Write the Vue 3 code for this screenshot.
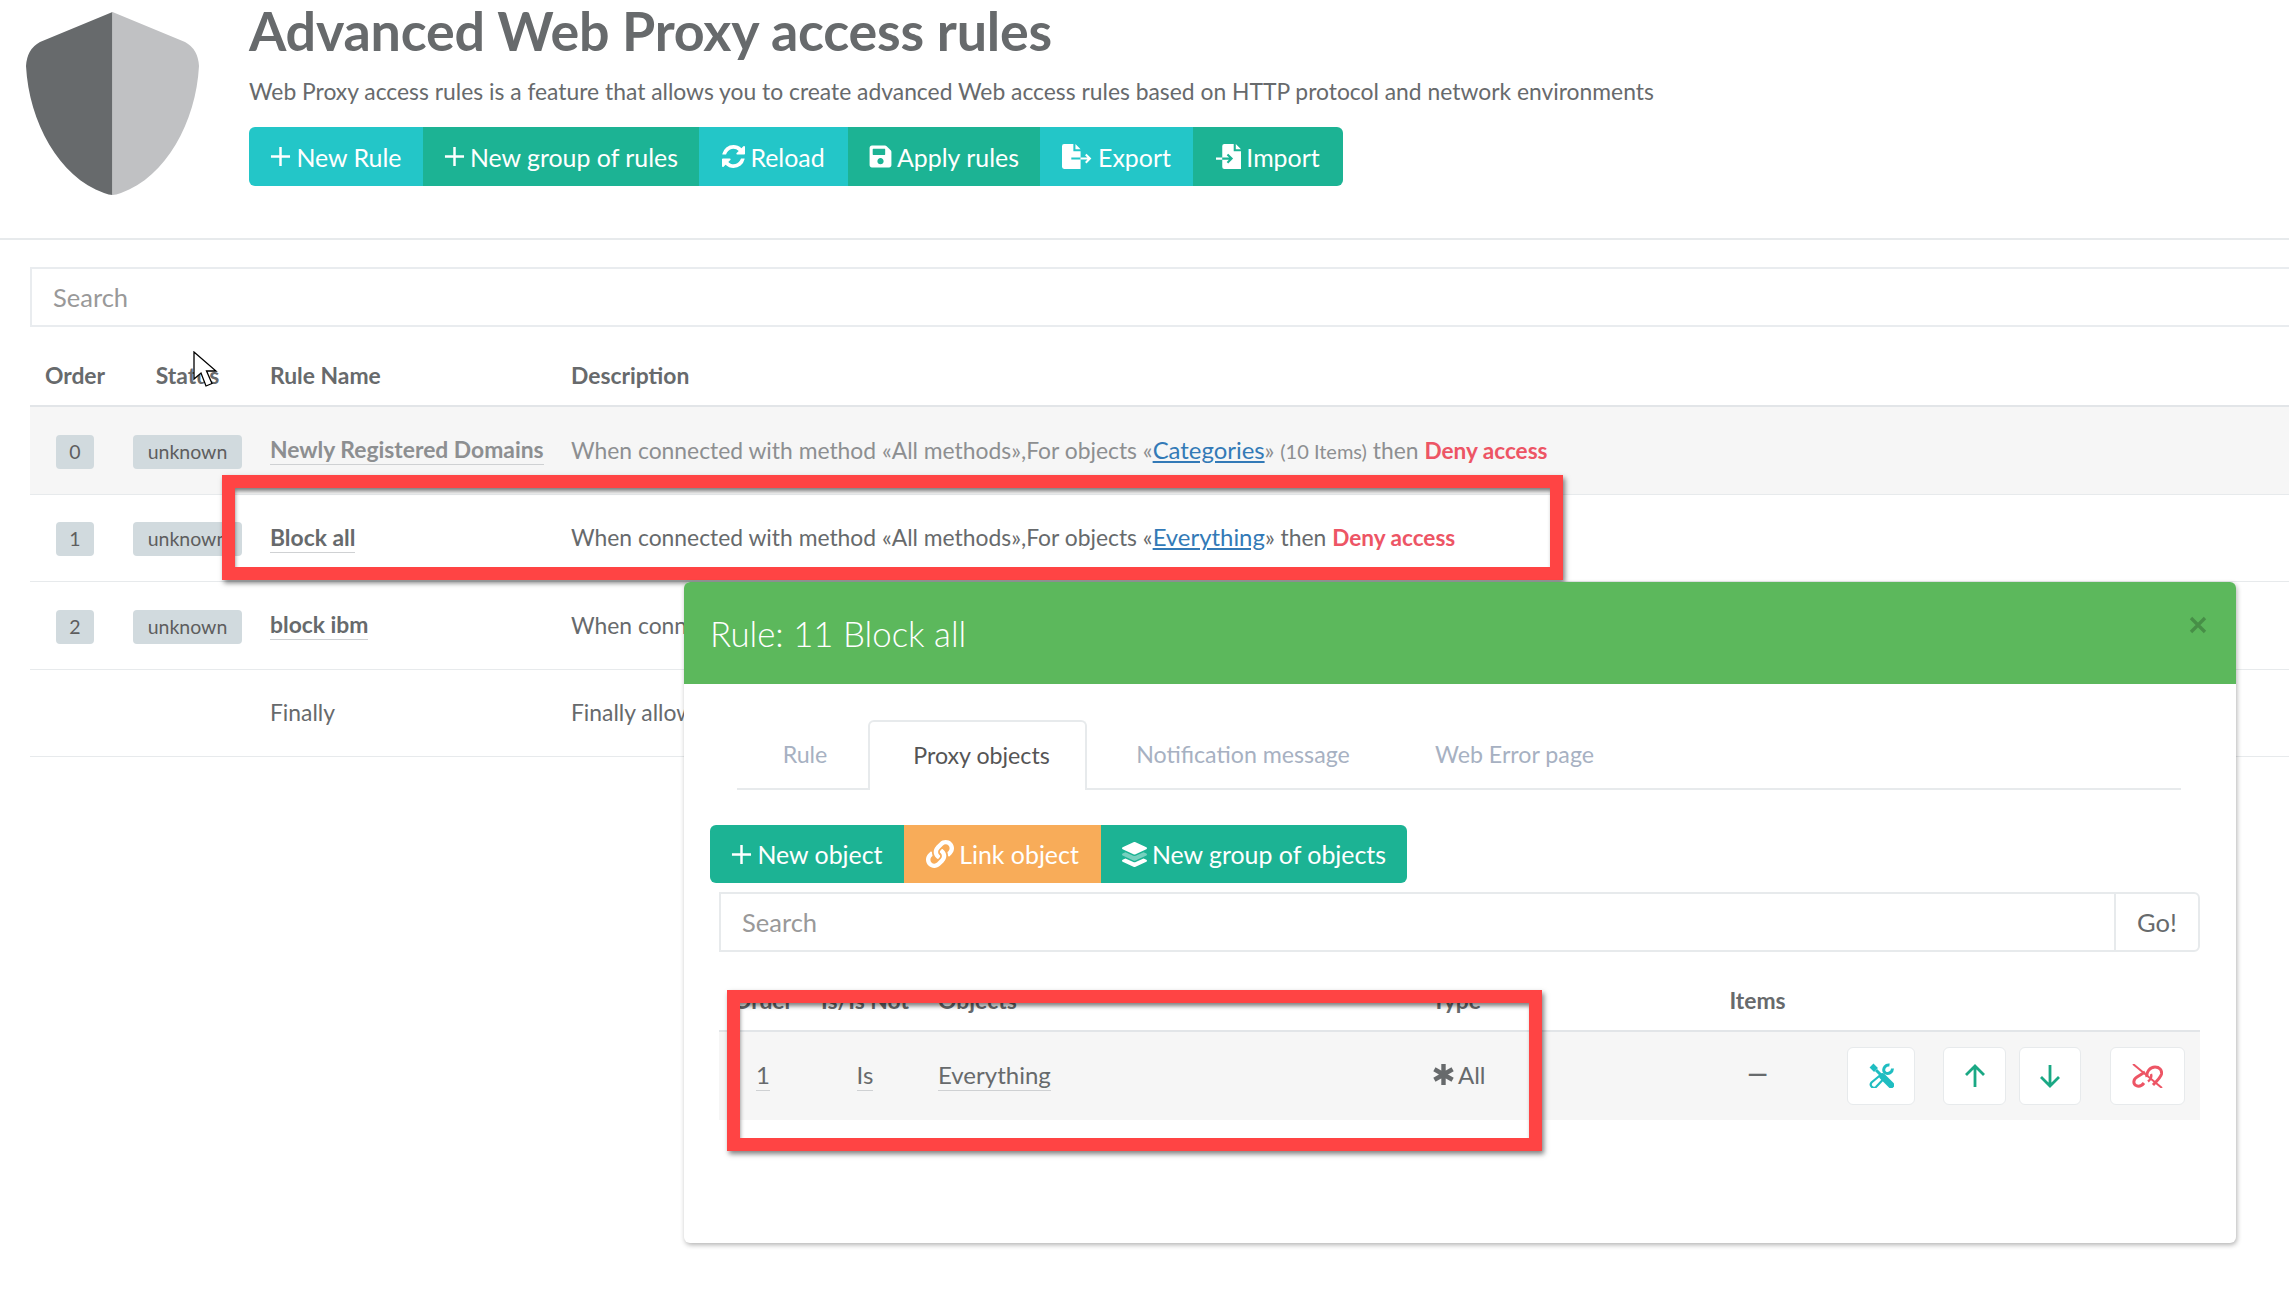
<script setup>
const rows = [
  { order: 0, name: 'Newly Registered Domains', muted: true, obj: 'Categories', items: '(10 Items)' },
  { order: 1, name: 'Block all', muted: false, obj: 'Everything', items: '' },
  { order: 2, name: 'block ibm', muted: false, obj: 'Everything', items: '' },
]
const topButtons = [
  { label: 'New Rule', icon: 'plus', tone: 'cyan', w: 174 },
  { label: 'New group of rules', icon: 'plus', tone: 'teal', w: 276 },
  { label: 'Reload', icon: 'reload', tone: 'cyan', w: 149 },
  { label: 'Apply rules', icon: 'save', tone: 'teal', w: 192 },
  { label: 'Export', icon: 'export', tone: 'cyan', w: 153 },
  { label: 'Import', icon: 'import', tone: 'teal', w: 150 },
]
const linkPath = 'M326.612 185.391c59.747 59.809 58.927 155.698.36 214.59-.11.12-.24.25-.36.37l-67.2 67.2c-59.27 59.27-155.699 59.262-214.96 0-59.27-59.26-59.27-155.7 0-214.96l37.106-37.106c9.84-9.84 26.786-3.3 27.294 10.606.648 17.722 3.826 35.527 9.69 52.721 1.986 5.822.567 12.262-3.783 16.612l-13.087 13.087c-28.026 28.026-28.905 73.66-1.155 101.96 28.024 28.579 74.086 28.749 102.325.51l67.2-67.19c28.191-28.191 28.073-73.757 0-101.83-3.701-3.694-7.429-6.564-10.341-8.569a16.037 16.037 0 0 1-6.947-12.606c-.396-10.567 3.348-21.456 11.698-29.806l21.054-21.055c5.521-5.521 14.182-6.199 20.584-1.731a152.482 152.482 0 0 1 20.522 17.197zM467.547 44.449c-59.261-59.262-155.69-59.27-214.96 0l-67.2 67.2c-.12.12-.25.25-.36.37-58.566 58.892-59.387 154.781.36 214.59a152.454 152.454 0 0 0 20.521 17.196c6.402 4.468 15.064 3.789 20.584-1.731l21.054-21.055c8.35-8.35 12.094-19.239 11.698-29.806a16.037 16.037 0 0 0-6.947-12.606c-2.912-2.005-6.64-4.875-10.341-8.569-28.073-28.073-28.191-73.639 0-101.83l67.2-67.19c28.239-28.239 74.3-28.069 102.325.51 27.75 28.3 26.872 73.934-1.155 101.96l-13.087 13.087c-4.35 4.35-5.769 10.79-3.783 16.612 5.864 17.194 9.042 34.999 9.69 52.721.509 13.906 17.454 20.446 27.294 10.606l37.106-37.106c59.271-59.259 59.271-155.699.001-214.959z'
</script>

<template>
  <div class="page">
    <header class="head">
      <svg class="shield" viewBox="0 0 173 184">
        <path fill="#676a6c" d="M86.5 0 L14 30 Q1 37 0 54 C3 110 33 165 78 181 Q83 183 86.5 183 Z" />
        <path fill="#c0c1c3" d="M86.5 0 L159 30 Q172 37 173 54 C170 110 140 165 95 181 Q90 183 86.5 183 Z" />
      </svg>
      <div class="head-text">
        <h1>Advanced Web Proxy access rules</h1>
        <p>Web Proxy access rules is a feature that allows you to create advanced Web access rules based on HTTP protocol and network environments</p>
        <div class="btn-group">
          <a v-for="b in topButtons" :key="b.label" class="btn" :class="b.tone" :style="{ width: b.w + 'px' }">
            <svg v-if="b.icon === 'plus'" class="ic ic-plus" viewBox="0 0 22 22"><path d="M11 1v20M1 11h20" stroke="#fff" stroke-width="2.6" fill="none" /></svg>
            <svg v-else-if="b.icon === 'reload'" class="ic ic-m" viewBox="128 128 1536 1536"><path fill="#fff" d="M1639 1056q0 5-1 7-64 268-268 434.5t-478 166.5q-146 0-282.5-55t-243.5-157l-129 129q-19 19-45 19t-45-19-19-45v-448q0-26 19-45t45-19h448q26 0 45 19t19 45-19 45l-137 137q71 66 161 102t187 36q134 0 250-65t186-179q11-17 53-117 8-23 30-23h192q13 0 22.5 9.5t9.5 22.5zm25-800v448q0 26-19 45t-45 19h-448q-26 0-45-19t-19-45 19-45l138-138q-148-137-349-137-134 0-250 65t-186 179q-11 17-53 117-8 23-30 23h-199q-13 0-22.5-9.5t-9.5-22.5v-7q65-268 270-434.5t480-166.5q146 0 284 55.5t245 156.5l130-129q19-19 45-19t45 19 19 45z" /></svg>
            <svg v-else-if="b.icon === 'save'" class="ic ic-m" viewBox="0 20 448 472"><path fill="#fff" d="M433.941 129.941l-83.882-83.882A48 48 0 0 0 316.118 32H48C21.49 32 0 53.49 0 80v352c0 26.51 21.49 48 48 48h352c26.51 0 48-21.49 48-48V163.882a48 48 0 0 0-14.059-33.941zM224 416c-35.346 0-64-28.654-64-64 0-35.346 28.654-64 64-64s64 28.654 64 64c0 35.346-28.654 64-64 64zm96-304.52V212c0 6.627-5.373 12-12 12H76c-6.627 0-12-5.373-12-12V108c0-6.627 5.373-12 12-12h228.52c3.183 0 6.235 1.264 8.485 3.515l3.48 3.48A11.996 11.996 0 0 1 320 111.48z" /></svg>
            <svg v-else-if="b.icon === 'export'" class="ic ic-file" viewBox="0 0 30 24">
              <path fill="#fff" d="M2 0h9v7h7v17H2a2 2 0 0 1-2-2V2a2 2 0 0 1 2-2zM13 0l5 5h-5z" />
              <path d="M9 14h9" stroke="#23c6c8" stroke-width="2" />
              <path d="M18 14h9M23 10l4 4-4 4" stroke="#fff" stroke-width="2" fill="none" />
            </svg>
            <svg v-else class="ic ic-import" viewBox="4 0 24 24">
              <path fill="#fff" d="M12 0h9v7h7v17H12a2 2 0 0 1-2-2V2a2 2 0 0 1 2-2zM23 0l5 5h-5z" />
              <path d="M4 14h6" stroke="#fff" stroke-width="2" />
              <path d="M10 14h9M15 10l4 4-4 4" stroke="#1cb394" stroke-width="2" fill="none" />
            </svg>
            <span>{{ b.label }}</span>
          </a>
        </div>
      </div>
    </header>

    <main class="list">
      <div class="search">Search</div>
      <div class="row row-head">
        <div class="c-order">Order</div>
        <div class="c-status">Status</div>
        <div class="c-name">Rule Name</div>
        <div class="c-desc">Description</div>
      </div>
      <div v-for="r in rows" :key="r.order" class="row" :class="{ muted: r.muted }">
        <div class="c-order"><span class="badge">{{ r.order }}</span></div>
        <div class="c-status"><span class="badge">unknown</span></div>
        <div class="c-name"><span class="dotted">{{ r.name }}</span></div>
        <div class="c-desc">When connected with method «All methods»,For objects «<a class="link">{{ r.obj }}</a>» <small v-if="r.items">{{ r.items }}</small>{{ r.items ? ' ' : '' }}then <b class="deny">Deny access</b></div>
      </div>
      <div class="row">
        <div class="c-order"></div>
        <div class="c-status"></div>
        <div class="c-name">Finally</div>
        <div class="c-desc">Finally allow access</div>
      </div>
    </main>

    <svg class="cursor" viewBox="0 0 30 38">
      <path d="M1 1v27l7-6 5 13 6-2.500-5.500-12.500H23z" fill="#fff" stroke="#000" stroke-width="1.300" />
    </svg>

    <div class="mark mark-a"></div>

    <section class="modal">
      <div class="modal-head">
        <span>Rule: 11 Block all</span>
        <svg class="close" viewBox="0 0 18 18"><path d="M2 2l14 14M16 2L2 16" stroke="#000" stroke-opacity=".22" stroke-width="3.400" /></svg>
      </div>
      <div class="tabs">
        <div class="tab t1">Rule</div>
        <div class="tab active">Proxy objects</div>
        <div class="tab t3">Notification message</div>
        <div class="tab t4">Web Error page</div>
      </div>
      <div class="btn-group obj">
        <a class="btn teal b1">
          <svg class="ic ic-plus" viewBox="0 0 22 22"><path d="M11 1v20M1 11h20" stroke="#fff" stroke-width="2.6" fill="none" /></svg>
          <span>New object</span>
        </a>
        <a class="btn orange b2">
          <svg class="ic ic-link" viewBox="0 0 512 512"><path fill="#fff" :d="linkPath" /></svg>
          <span>Link object</span>
        </a>
        <a class="btn teal b3">
          <svg class="ic ic-layers" viewBox="0 0 512 512">
            <path fill="#fff" d="M12.41 148.020l232.940 105.670c6.800 3.090 14.490 3.090 21.290 0l232.940-105.670c16.550-7.510 16.550-32.520 0-40.030L266.650 2.310a25.607 25.607 0 0 0-21.290 0L12.410 107.980c-16.550 7.510-16.550 32.530 0 40.040z" />
            <path fill="#fff" fill-opacity=".4" d="M499.590 236.300l-58.090-26.330-161.640 73.270c-7.560 3.430-15.590 5.170-23.860 5.170s-16.290-1.740-23.860-5.170L70.510 209.970l-58.100 26.330c-16.550 7.500-16.550 32.500 0 40l232.940 105.590c6.800 3.080 14.490 3.080 21.290 0L499.590 276.300c16.550-7.500 16.550-32.500 0-40z" />
            <path fill="#fff" d="M499.590 364.100l-57.870-26.230-161.860 73.370c-7.560 3.430-15.590 5.170-23.860 5.170s-16.290-1.740-23.860-5.170L70.290 337.870 12.410 364.100c-16.550 7.500-16.550 32.500 0 40l232.940 105.590c6.800 3.080 14.490 3.080 21.290 0L499.590 404.100c16.550-7.500 16.550-32.500 0-40z" />
          </svg>
          <span>New group of objects</span>
        </a>
      </div>
      <div class="input-group">
        <div class="field">Search</div>
        <div class="go">Go!</div>
      </div>
      <div class="obj-row obj-head">
        <div class="o-order">Order</div>
        <div class="o-is">Is/Is Not</div>
        <div class="o-name">Objects</div>
        <div class="o-type">Type</div>
        <div class="o-items">Items</div>
        <div class="o-actions"></div>
      </div>
      <div class="obj-row obj-body">
        <div class="o-order"><span class="dotted">1</span></div>
        <div class="o-is"><span class="dotted">Is</span></div>
        <div class="o-name"><span class="dotted">Everything</span></div>
        <div class="o-type">
          <svg class="ic-star" viewBox="0 0 22 22"><path d="M11 1v20M2.300 6l17.400 10M19.700 6L2.300 16" stroke="#676a6c" stroke-width="4.200" /></svg>
          <span>All</span>
        </div>
        <div class="o-items dash">—</div>
        <div class="o-actions">
          <button class="act a-tools">
            <svg class="ic-tools" viewBox="0 0 25 25" fill="none">
              <path d="M2.500 2.500L7 7" stroke="#1fbdc1" stroke-width="5.500" />
              <path d="M7 7l6 6" stroke="#1fbdc1" stroke-width="3" />
              <path d="M13.500 13.500l8.500 8.500" stroke="#1fbdc1" stroke-width="6.500" stroke-linecap="round" />
              <path d="M11.500 12L2.500 19.500a3.200 3.200 0 0 0 4.500 4.500L15 15.500" stroke="#1fbdc1" stroke-width="2.200" />
              <path d="M20.500 2A5 5 0 0 0 15 8.500L16.500 10A5 5 0 0 0 23.500 5.500" stroke="#1fbdc1" stroke-width="3" />
            </svg>
          </button>
          <button class="act a-up">
            <svg class="ic-act" viewBox="0 0 24 26" fill="none"><path d="M12 24V3M3 12l9-9 9 9" stroke="#1aa884" stroke-width="2.800" /></svg>
          </button>
          <button class="act a-down">
            <svg class="ic-act" viewBox="0 0 24 26" fill="none"><path d="M12 2v21M3 14l9 9 9-9" stroke="#1aa884" stroke-width="2.800" /></svg>
          </button>
          <button class="act a-unlink">
            <svg class="ic-unlink" viewBox="0 0 31 24" fill="none">
              <path d="M15 13C14 8 18 3 23 3C27.500 3 30 6 29.500 10C29 13 25 17 21 21" stroke="#ed5565" stroke-width="3" />
              <path d="M13 8L5 13C1 15.500 1 20 4 21.500C7 23 10 21.500 12 19" stroke="#ed5565" stroke-width="3" />
              <path d="M19 10C20 13 18 16 16 17.500" stroke="#ed5565" stroke-width="2.400" />
              <path d="M1 0L30 24" stroke="#ed5565" stroke-width="2" />
            </svg>
          </button>
        </div>
      </div>
    </section>

    <div class="mark mark-b"></div>
  </div>
</template>

<style>
html, body { margin: 0; background: #fff; overflow: hidden; }
</style>

<style scoped>
.page {
  position: relative;
  width: 2289px;
  height: 1289px;
  overflow: hidden;
  background: #fff;
  font-family: Lato, "Liberation Sans", sans-serif;
  color: #676a6c;
  font-size: 22.85px;
}
.head {
  display: flex;
  height: 240px;
  box-sizing: border-box;
  border-bottom: 2px solid #e7eaec;
}
.shield { width: 173px; height: 184px; margin: 12px 0 0 26px; flex: none; }
.head-text { margin-left: 50px; padding-top: 7px; }
h1 { margin: 0; font-size: 53.8px; line-height: 46px; font-weight: 700; color: #676a6c; letter-spacing: -.2px; }
.head-text p { margin: 23px 0 0; font-size: 22.85px; line-height: 30px; white-space: nowrap; }
.btn-group { display: flex; margin-top: 21px; border-radius: 6px; overflow: hidden; width: max-content; }
.btn {
  display: flex; align-items: center; justify-content: center; gap: 5px;
  height: 59px; color: #fff; font-size: 24.9px; font-weight: 400; white-space: nowrap;
}
.cyan { background: #23c6c8; }
.teal { background: #1cb394; }
.orange { background: #f8ac59; }
.ic { flex: none; }
.ic-plus { width: 21px; height: 21px; }
.ic-m { width: 23px; height: 23px; }
.ic-file { width: 31px; height: 25px; }
.ic-import { width: 25px; height: 25px; }
.ic-link { width: 28px; height: 28px; }
.ic-layers { width: 25px; height: 25px; }

.list { margin: 27px 0 0 30px; }
.search {
  height: 60px; box-sizing: border-box; border: 2px solid #e9ecef; border-right: 0;
  display: flex; align-items: center; padding-left: 21px; color: #999; font-size: 25.5px;
}
.row { display: flex; align-items: center; height: 87.5px; box-sizing: border-box; border-bottom: 1.500px solid #e7eaec; }
.row-head { height: 80px; padding-top: 18px; border-bottom: 2px solid #e2e5e8; font-weight: 700; }
.muted { background: #f6f6f6; color: #8d8f91; }
.c-order { width: 90px; text-align: center; flex: none; padding-top: 3px; }
.c-status { width: 135px; text-align: center; flex: none; padding-top: 3px; }
.row-head .c-order, .row-head .c-status { padding-top: 0; }
.c-name { width: 301px; padding: 0 0 2px 15px; box-sizing: border-box; flex: none; }
.c-desc { padding: 0 0 2px 15px; white-space: nowrap; }
.row-head .c-name, .row-head .c-desc { padding-bottom: 0; }
.badge {
  display: inline-block; background: #d1dade; color: #5e5e5e; border-radius: 4px;
  font-size: 19.5px; line-height: 34px; padding: 0 14px;
}
.row .c-status .badge { padding: 0; width: 109px; }
.row .c-order .badge { padding: 0; width: 38px; }
.dotted { border-bottom: 1.500px solid #cfd1d3; padding-bottom: 1px; }
.row .c-name .dotted { font-weight: 700; }
.link { color: #337ab7; text-decoration: underline; font-size: 23.9px; }
small { font-size: 20px; }
.deny { color: #ed5565; font-weight: 700; font-size: 22.6px; }

.cursor { position: absolute; left: 193px; top: 351px; width: 30px; height: 38px; }

.mark {
  position: absolute; box-sizing: border-box; border: 13px solid #ff4444;
  box-shadow: 2px 3px 5px rgba(0,0,0,.5), inset 1px 4px 4px -1px rgba(0,0,0,.5);
}
.mark-a { left: 222px; top: 475px; width: 1341px; height: 105px; }
.mark-b { left: 727px; top: 990px; width: 815px; height: 161px; }

.modal {
  position: absolute; left: 684px; top: 582px; width: 1552px; height: 661px;
  background: #fff; border-radius: 6px; box-shadow: 1px 2px 5px rgba(0,0,0,.3);
}
.modal-head {
  position: relative; height: 102px; background: #5cb85c; color: #fff;
  border-radius: 6px 6px 0 0; display: flex; align-items: center;
  padding-left: 26px; font-size: 34.8px; font-weight: 300;
}
.close { position: absolute; left: 1505px; top: 34px; width: 18px; height: 18px; }
.tabs {
  display: flex; margin: 36px 55px 0 53px; height: 70px; box-sizing: border-box;
  border-bottom: 2px solid #e7eaec; font-size: 23.2px; color: #a7b1c2;
}
.tab { display: flex; align-items: center; justify-content: center; height: 70px; box-sizing: border-box; padding-bottom: 2px; }
.t1 { width: 131px; padding-left: 5px; }
.active {
  width: 219px; background: #fff; color: #555; border: 2px solid #e7eaec; border-bottom: 0;
  border-radius: 6px 6px 0 0; padding-left: 8px;
}
.t3 { width: 312px; }
.t4 { width: 231px; }
.obj { margin: 35px 0 0 26px; }
.obj .btn { height: 58px; }
.b1 { width: 194px; }
.b2 { width: 197px; }
.b3 { width: 306px; }
.input-group { display: flex; margin: 9px 36px 0 35px; height: 60px; }
.field {
  flex: 1; box-sizing: border-box; border: 2px solid #e7eaec; border-right: 0; color: #999;
  display: flex; align-items: center; padding-left: 21px; font-size: 25.5px;
}
.go {
  width: 86px; box-sizing: border-box; border: 2px solid #e7eaec; border-radius: 0 6px 6px 0;
  display: flex; align-items: center; justify-content: center; font-size: 25.5px;
}
.obj-row { display: flex; align-items: center; margin: 0 36px 0 35px; }
.obj-head { height: 80px; padding-top: 18px; border-bottom: 2px solid #e2e5e8; font-weight: 700; box-sizing: border-box; }
.obj-body { height: 88px; padding-bottom: 3px; box-sizing: border-box; background: #f6f6f6; font-size: 24px; }
.o-order { width: 88px; text-align: center; flex: none; }
.o-is { width: 116px; text-align: center; flex: none; }
.o-name { width: 497px; padding-left: 15px; box-sizing: border-box; flex: none; }
.o-type { width: 260px; padding-left: 12px; box-sizing: border-box; flex: none; display: flex; align-items: center; gap: 3px; }
.o-items { width: 155px; text-align: center; flex: none; }
.dash { font-weight: 700; font-size: 26px; padding-bottom: 3px; }
.ic-star { width: 23px; height: 23px; }
.o-actions { display: flex; flex: 1; padding-left: 12px; }
.obj-body .o-actions { margin-top: 2px; }
.act {
  height: 58px; box-sizing: border-box; background: #fff; border: 1.500px solid #e7eaec; border-radius: 6px;
  padding: 0; display: flex; align-items: center; justify-content: center;
}
.a-tools { width: 68px; margin-right: 28px; }
.a-up { width: 63px; margin-right: 13px; }
.a-down { width: 62px; margin-right: 29px; }
.a-unlink { width: 75px; }
.ic-act { width: 24px; height: 26px; }
.ic-tools { width: 25px; height: 25px; }
.ic-unlink { width: 31px; height: 24px; }
</style>
